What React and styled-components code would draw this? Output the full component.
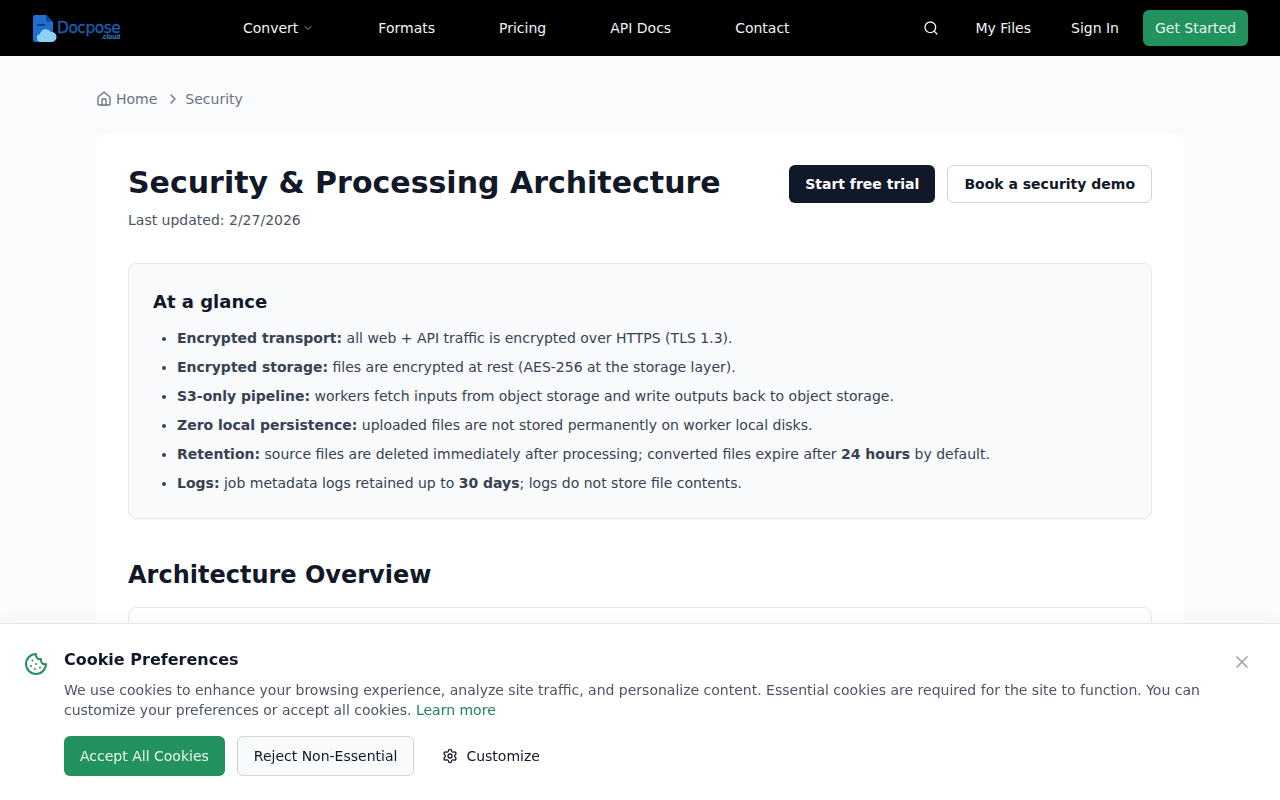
import React from "react";
import styled, { createGlobalStyle } from "styled-components";
import { ChevronDown, ChevronRight, Cookie, House, Search, Settings, X } from "lucide-react";

const Global = createGlobalStyle`
  html, body { margin: 0; padding: 0; background: #fafbfd; }
  body { font-family: "DejaVu Sans", sans-serif; color: #111827; overflow: hidden; height: 800px; }
  * { box-sizing: border-box; }
`;

const Header = styled.header`
  height: 56px; background: #000; display: flex; align-items: center;
  padding: 0 32px;
`;
const Logo = styled.div`display: flex; align-items: center; width: 89px; height: 30px;`;
const LogoMark = styled.svg`flex: none; margin-left: 1px;`;
const LogoWords = styled.div`
  display: flex; flex-direction: column; align-items: flex-end; margin-left: 0;
  padding-top: 6px;
`;
const LogoName = styled.span`
  font-family: "DejaVu Sans", sans-serif; font-size: 15.4px; line-height: 12px; letter-spacing: -.45px; color: #1b5fae;
  -webkit-text-stroke: .3px #1b5fae;
`;
const LogoTld = styled.span`
  font-family: "Liberation Sans", sans-serif; font-size: 6.5px; line-height: 6px; color: #2f8fd8; font-weight: 700;
`;
const MainNav = styled.nav`display: flex; align-items: center; gap: 64px; margin-left: 122px;`;
const NavLink = styled.a`
  color: #f3f4f6; font-size: 14px; line-height: 20px; display: inline-flex; align-items: center; gap: 4px;
`;
const RightNav = styled.div`display: flex; align-items: center; margin-left: auto;`;
const IconButton = styled.span`display: inline-flex; color: #f3f4f6; margin-right: 36px;`;
const RightLink = styled(NavLink)`margin-right: ${(p) => p.$gap}px;`;
const GetStarted = styled.a`
  height: 36px; width: 105px; border-radius: 6px; background: #22935f; color: #e8f5ee;
  font-size: 14px; display: flex; align-items: center; justify-content: center;
`;

const Main = styled.main`padding: 33px 96px 0;`;
const Crumbs = styled.nav`
  display: flex; align-items: center; height: 20px; font-size: 14px; color: #6b7280; margin-bottom: 24px;
`;
const CrumbHome = styled.span`display: inline-flex; align-items: center; gap: 4px;`;
const CrumbSep = styled.span`display: inline-flex; margin: 0 4px 0 8px;`;
const Card = styled.article`
  background: #fff; border-radius: 12px; padding: 32px; height: 900px;
  box-shadow: 0 1px 2px rgba(0,0,0,.01);
`;
const TitleRow = styled.div`display: flex; justify-content: space-between; align-items: flex-start;`;
const Title = styled.h1`margin: 0; font-size: 30px; line-height: 36px; font-weight: 700; color: #111827;`;
const Updated = styled.p`margin: 8px 0 0; font-size: 14px; line-height: 22px; color: #4b5563;`;
const Actions = styled.div`display: flex; gap: 12px;`;
const DarkBtn = styled.a`
  height: 38px; padding: 0 16px; border-radius: 6px; background: #111827; color: #fff;
  font-size: 14px; font-weight: 700; display: flex; align-items: center;
`;
const LightBtn = styled(DarkBtn)`background: #fff; color: #111827; border: 1px solid #d1d5db;`;
const Glance = styled.section`
  margin-top: 32px; background: #f8fafc; border: 1px solid #e5e7eb; border-radius: 8px; padding: 24px;
`;
const GlanceTitle = styled.h2`margin: 0 0 12px; font-size: 18px; line-height: 28px; font-weight: 700; color: #111827;`;
const List = styled.ul`margin: 0; padding: 0 0 0 24px; font-size: 14px; line-height: 21px; color: #374151;`;
const Item = styled.li`margin-bottom: 8px; &:last-child { margin-bottom: 0; }`;
const Strong = styled.strong`font-weight: 700; color: #374151;`;
const SectionTitle = styled.h2`margin: 40px 0 16px; font-size: 24px; line-height: 32px; font-weight: 700; color: #111827;`;
const Diagram = styled.div`height: 300px; border: 1px solid #e5e7eb; border-radius: 8px; background: #fff;`;

const Banner = styled.aside`
  position: fixed; left: 0; right: 0; bottom: 0; height: 177px; background: #fff;
  border-top: 1px solid #e5e7eb; padding: 24px; display: flex; gap: 16px;
  box-shadow: 0 -4px 16px rgba(0,0,0,.025);
`;
const CookieMark = styled.div`color: #22935f; padding-top: 4px; flex: none; height: 24px; display: flex;`;
const BannerBody = styled.div`flex: 1; min-width: 0;`;
const BannerTitle = styled.h3`margin: 0 0 8px; font-size: 16px; line-height: 24px; font-weight: 700; color: #111827;`;
const BannerText = styled.p`margin: 0; font-size: 14px; line-height: 20px; color: #4b5563; max-width: 1140px;`;
const LearnMore = styled.a`color: #22835a;`;
const BannerActions = styled.div`display: flex; align-items: center; gap: 12px; margin-top: 16px;`;
const Accept = styled.a`
  height: 40px; padding: 0 16px; border-radius: 6px; background: #22935f; color: #ecf7f1;
  font-size: 14px; display: flex; align-items: center;
`;
const Reject = styled(Accept)`background: #f9fafb; color: #111827; border: 1px solid #d1d5db;`;
const Customize = styled(Accept)`background: transparent; color: #111827; gap: 8px;`;
const Close = styled.span`position: absolute; top: 28px; right: 28px; display: flex; color: #9ca3af;`;

export default function App() {
  return (
    <>
      <Global />
      <Header>
        <Logo>
          <LogoMark width="24" height="27" viewBox="0 0 24 27">
            <path d="M2 0h11l7 7v18a2 2 0 0 1-2 2H2a2 2 0 0 1-2-2V2a2 2 0 0 1 2-2z" fill="#1f6fd0" />
            <path d="M13 0l7 7h-7z" fill="#0f4c9c" />
            <path d="M4 10h8" stroke="#0b2f66" strokeWidth="1.5" />
            <path d="M8 27a4 4 0 0 1-1-7.9A6 6 0 0 1 18 17a5 5 0 0 1 1 10z" fill="#8fd0f5" />
          </LogoMark>
          <LogoWords>
            <LogoName>Docpose</LogoName>
            <LogoTld>.cloud</LogoTld>
          </LogoWords>
        </Logo>
        <MainNav>
          <NavLink>Convert <ChevronDown size={12} color="#9ca3af" /></NavLink>
          <NavLink>Formats</NavLink>
          <NavLink>Pricing</NavLink>
          <NavLink>API Docs</NavLink>
          <NavLink>Contact</NavLink>
        </MainNav>
        <RightNav>
          <IconButton><Search size={16} /></IconButton>
          <RightLink $gap={40}>My Files</RightLink>
          <RightLink $gap={24}>Sign In</RightLink>
          <GetStarted>Get Started</GetStarted>
        </RightNav>
      </Header>
      <Main>
        <Crumbs>
          <CrumbHome><House size={16} />Home</CrumbHome>
          <CrumbSep><ChevronRight size={16} /></CrumbSep>
          <span>Security</span>
        </Crumbs>
        <Card>
          <TitleRow>
            <div>
              <Title>Security &amp; Processing Architecture</Title>
              <Updated>Last updated: 2/27/2026</Updated>
            </div>
            <Actions>
              <DarkBtn>Start free trial</DarkBtn>
              <LightBtn>Book a security demo</LightBtn>
            </Actions>
          </TitleRow>
          <Glance>
            <GlanceTitle>At a glance</GlanceTitle>
            <List>
              <Item><Strong>Encrypted transport:</Strong> all web + API traffic is encrypted over HTTPS (TLS 1.3).</Item>
              <Item><Strong>Encrypted storage:</Strong> files are encrypted at rest (AES-256 at the storage layer).</Item>
              <Item><Strong>S3-only pipeline:</Strong> workers fetch inputs from object storage and write outputs back to object storage.</Item>
              <Item><Strong>Zero local persistence:</Strong> uploaded files are not stored permanently on worker local disks.</Item>
              <Item><Strong>Retention:</Strong> source files are deleted immediately after processing; converted files expire after <Strong>24 hours</Strong> by default.</Item>
              <Item><Strong>Logs:</Strong> job metadata logs retained up to <Strong>30 days</Strong>; logs do not store file contents.</Item>
            </List>
          </Glance>
          <SectionTitle>Architecture Overview</SectionTitle>
          <Diagram />
        </Card>
      </Main>
      <Banner>
        <CookieMark><Cookie size={24} /></CookieMark>
        <BannerBody>
          <BannerTitle>Cookie Preferences</BannerTitle>
          <BannerText>
            We use cookies to enhance your browsing experience, analyze site traffic, and personalize content. Essential cookies are required for the site to function. You can customize your preferences or accept all cookies. <LearnMore>Learn more</LearnMore>
          </BannerText>
          <BannerActions>
            <Accept>Accept All Cookies</Accept>
            <Reject>Reject Non-Essential</Reject>
            <Customize><Settings size={16} />Customize</Customize>
          </BannerActions>
        </BannerBody>
        <Close><X size={20} /></Close>
      </Banner>
    </>
  );
}
